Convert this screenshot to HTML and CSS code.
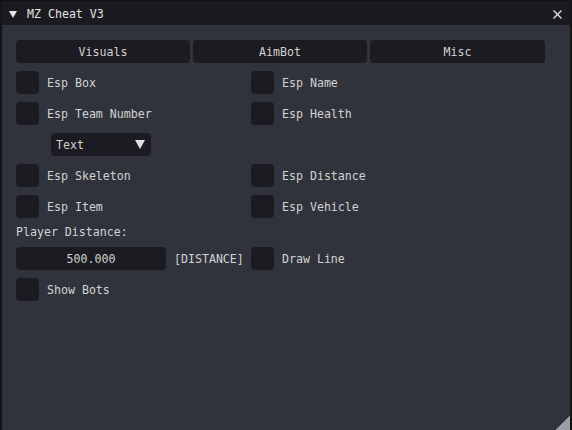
FILE: index.html
```html
<!DOCTYPE html>
<html lang="en">
<head>
    <meta charset="UTF-8">
    <title>MZ Cheat V3</title>
    <link rel="stylesheet" href="styles.css">
</head>
<body>
    <div class="window">
        <div class="title-bar">
            <span class="collapse-arrow"></span>
            <span class="title">MZ Cheat V3</span>
            <svg class="close-btn" width="9" height="9" viewBox="0 0 9 9"><path d="M0.5 0.5 L8.5 8.5 M8.5 0.5 L0.5 8.5" stroke="#e6e6e6" stroke-width="1.3"/></svg>
        </div>

        <div class="content">
            <div class="tabs">
                <button class="tab">Visuals</button>
                <button class="tab">AimBot</button>
                <button class="tab">Misc</button>
            </div>

            <div class="row">
                <label class="check"><span class="box"></span>Esp Box</label>
                <label class="check"><span class="box"></span>Esp Name</label>
            </div>
            <div class="row">
                <label class="check"><span class="box"></span>Esp Team Number</label>
                <label class="check"><span class="box"></span>Esp Health</label>
            </div>
            <div class="combo">
                <span>Text</span>
                <span class="combo-arrow"></span>
            </div>
            <div class="row">
                <label class="check"><span class="box"></span>Esp Skeleton</label>
                <label class="check"><span class="box"></span>Esp Distance</label>
            </div>
            <div class="row">
                <label class="check"><span class="box"></span>Esp Item</label>
                <label class="check"><span class="box"></span>Esp Vehicle</label>
            </div>
            <div class="text-line">Player Distance:</div>
            <div class="row">
                <div class="slider-group">
                    <div class="slider">500.000</div>
                    <span>[DISTANCE]</span>
                </div>
                <label class="check"><span class="box"></span>Draw Line</label>
            </div>
            <div class="row">
                <label class="check"><span class="box"></span>Show Bots</label>
            </div>
        </div>

        <div class="resize-grip"></div>
    </div>
</body>
</html>
```

FILE: styles.css
```css
* { margin: 0; padding: 0; box-sizing: border-box; }
body { background: #141417; color: #d2d2d2; font-family: "DejaVu Sans Mono", "Liberation Mono", monospace; font-size: 11.6px; width: 572px; height: 430px; overflow: hidden; padding: 2px 2px 0 2px; }

.window { position: relative; height: 428px; background: #30333c; border-radius: 4px 4px 0 0; overflow: hidden; }

.title-bar { height: 23px; background: #1b1a20; display: flex; align-items: center; padding: 0 7px 0 7px; color: #e4e4e4; border-top: 1px solid #232228; }
.collapse-arrow { width: 0; height: 0; border-left: 4px solid transparent; border-right: 4px solid transparent; border-top: 7px solid #e8e8e8; margin-right: 10px; }
.title { flex: 1; }
.close-btn { margin-right: 1px; }

.content { padding: 15px 0 0 14px; display: flex; flex-direction: column; gap: 8px; }

.tabs { display: flex; gap: 3px; }
.tab { width: 174px; height: 23px; background: #1c1b21; border: none; border-radius: 4px; color: #d2d2d2; font: inherit; }
.tab:last-child { width: 175px; }

.row { display: grid; grid-template-columns: 235px 1fr; align-items: center; height: 23px; }
.check { display: flex; align-items: center; gap: 8px; }
.box { width: 23px; height: 23px; background: #1c1b21; border-radius: 4px; }

.combo { margin-left: 35px; width: 100px; height: 23px; background: #1c1b21; border-radius: 4px; display: flex; align-items: center; justify-content: space-between; padding: 0 6px 0 5px; }
.combo-arrow { width: 0; height: 0; border-left: 5px solid transparent; border-right: 5px solid transparent; border-top: 9px solid #e0e0e0; }

.text-line { height: 13px; line-height: 13px; }

.slider-group { display: flex; align-items: center; gap: 8px; }
.slider { width: 150px; height: 23px; background: #1c1b21; border-radius: 4px; display: flex; align-items: center; justify-content: center; }

.resize-grip { position: absolute; right: 0; bottom: 0; width: 15px; height: 15px; background: linear-gradient(to bottom right, transparent 50%, #9a9ca6 50%); }
```
